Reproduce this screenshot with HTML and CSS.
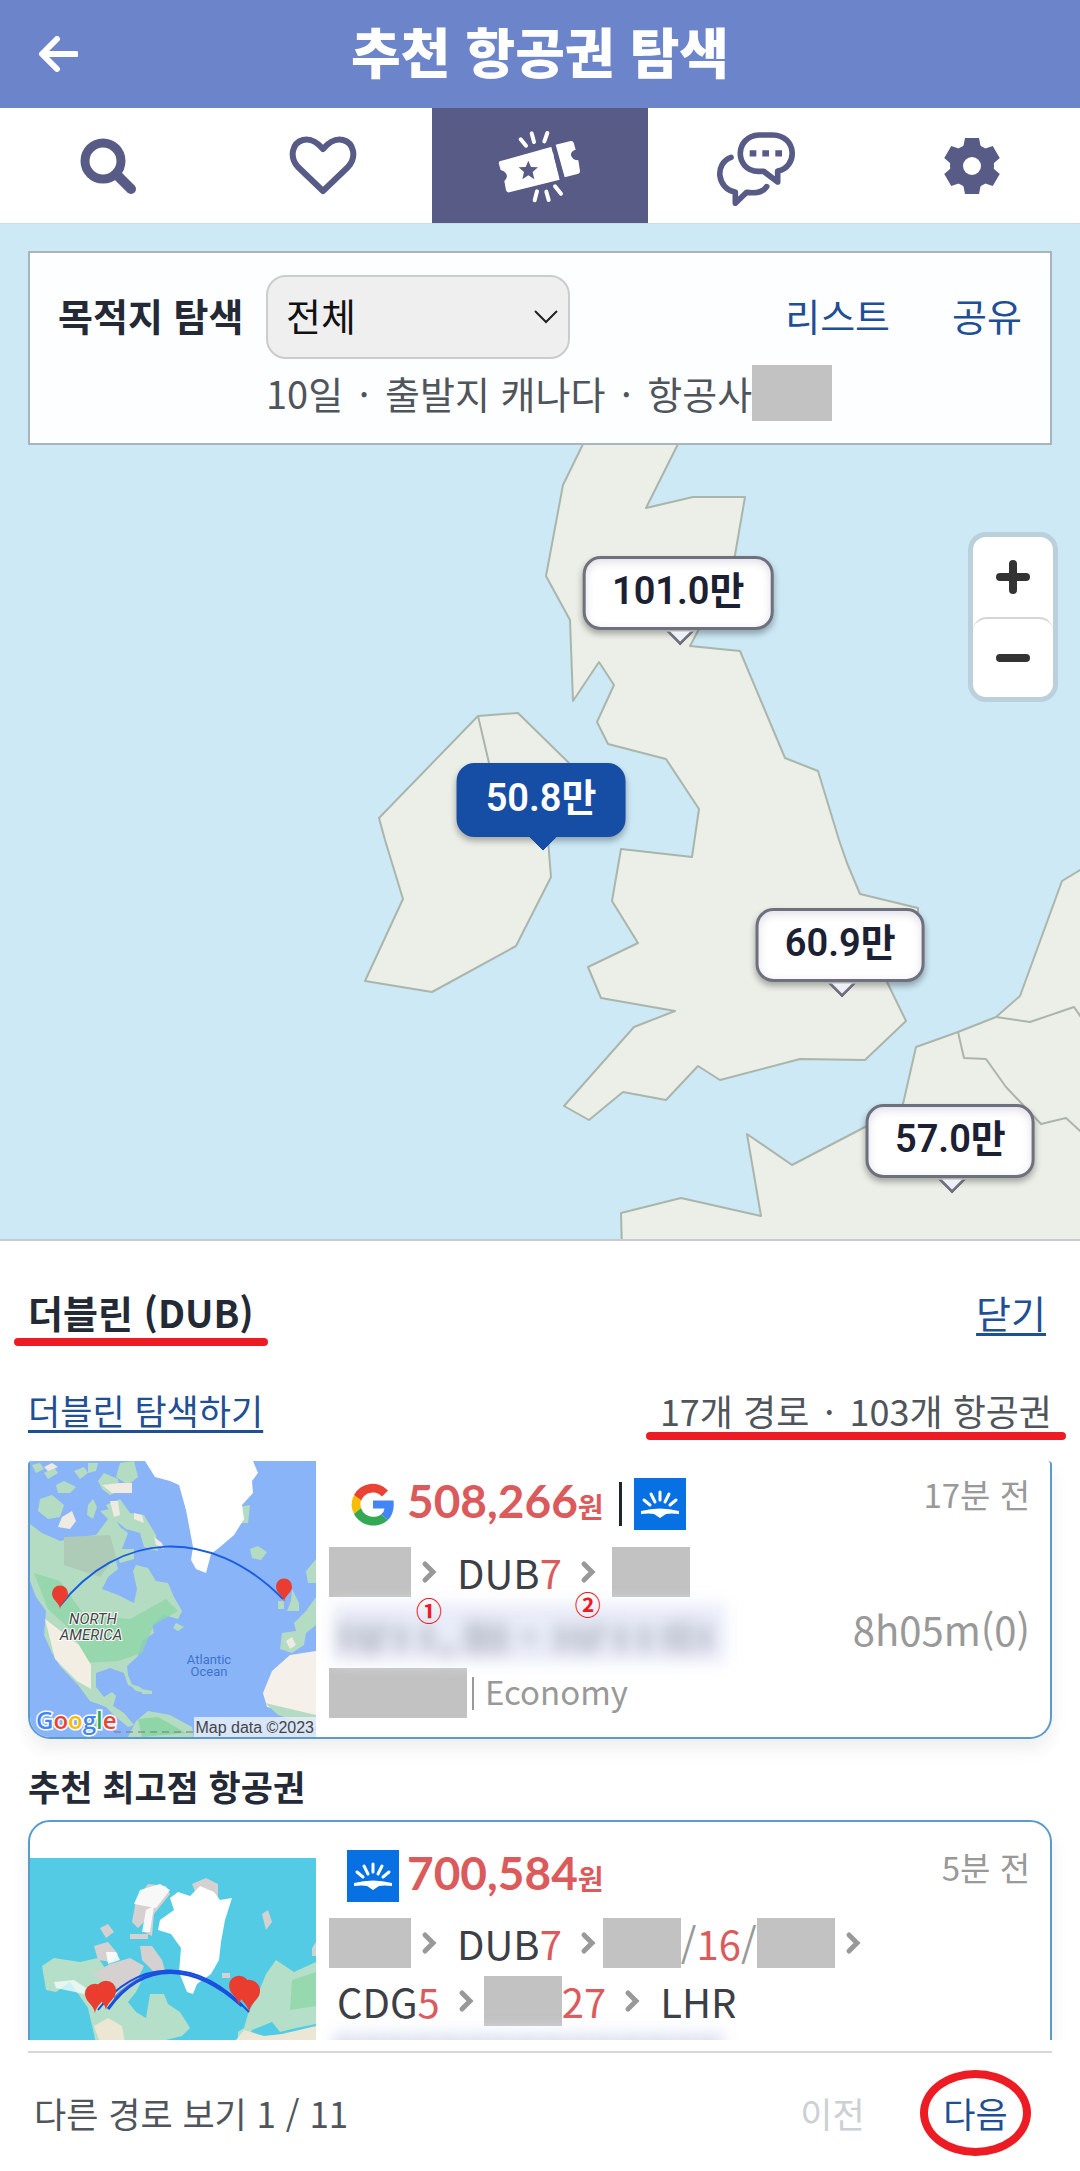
FILE: index.html
```html
<!DOCTYPE html>
<html lang="ko">
<head>
	<meta charset="utf-8">
	<meta name="viewport" content="width=device-width, initial-scale=1">
	<title>추천 항공권 탐색</title>
	<link rel="stylesheet" href="styles.css">
</head>
<body>

<!-- shared icons -->
<svg class="defs" aria-hidden="true">
	<symbol id="chev" viewBox="0 0 16 24">
		<path d="M4 4l8 8-8 8" fill="none" stroke="#999" stroke-width="5" stroke-linecap="round" stroke-linejoin="miter"/>
	</symbol>
	<symbol id="sky" viewBox="0 0 52 52">
		<rect width="52" height="52" fill="#0770e3"/>
		<g stroke="#fff" stroke-width="3" stroke-linecap="round">
			<path d="M26 14v8M17 16l4 8M35 16l-4 8M10 22l6 5M42 22l-6 5"/>
		</g>
		<path d="M7 33q19-5 38 0v3q-8-1-13 0l-6 4-6-4q-5-1-13 0z" fill="#fff"/>
	</symbol>
	<symbol id="mappin" viewBox="0 0 18 24">
		<path d="M9 24C8 17 1 15 1 8.500a8 8 0 0 1 16 0C17 15 10 17 9 24z" fill="#ea3c2f"/>
	</symbol>
</svg>

<header class="top">
	<button class="back" aria-label="뒤로">
		<svg width="40" height="36" viewBox="0 0 40 36"><path d="M19 3L4 18l15 15M5 18h33" fill="none" stroke="#fff" stroke-width="6" stroke-linecap="round" stroke-linejoin="round"/></svg>
	</button>
	<h1>추천 항공권 탐색</h1>
</header>

<nav class="tabs">
	<a href="#" aria-label="검색">
		<svg width="56" height="56" viewBox="0 0 56 56"><circle cx="23" cy="23" r="18" fill="none" stroke="#575b86" stroke-width="9"/><path d="M38 38l13 13" stroke="#575b86" stroke-width="10" stroke-linecap="round"/></svg>
	</a>
	<a href="#" aria-label="찜">
		<svg width="70" height="60" viewBox="0 0 70 60"><path d="M34 55L9 31C0 21 3 7 14 4c8-2 14 2 20 9 6-7 12-11 20-9 11 3 14 17 5 27z" fill="none" stroke="#575b86" stroke-width="6" stroke-linejoin="round"/></svg>
	</a>
	<a href="#" class="on" aria-label="추천 항공권">
		<svg width="90" height="80" viewBox="48 46 270 240">
			<path d="M62 152q-4 4-2 9l5 17q18 5 19 19-1 7-8 14l5 28q3 8 10 6l151-38-24-99zM230 102l45-11q7-1 9 5l6 21q-15 4-14 17 4 15 22 15l5 32q0 6-5 8l-41 11z" fill="#fff"/>
			<path d="M148 150l8 19 21 1-16 14 5 22-18-12-18 12 5-22-16-14 21-1z" fill="#575b86"/>
			<path d="M221 106l26 98" stroke="#575b86" stroke-width="9" stroke-dasharray="22 8"/>
			<path d="M125 86l16 19M158 68l7 26M205 67l-9 25M174 242l-7 27M202 243l7 25M228 227l18 22" stroke="#fff" stroke-width="12" stroke-linecap="round"/>
		</svg>
	</a>
	<a href="#" aria-label="채팅">
		<svg width="86" height="80" viewBox="700 48 258 240" fill="none" stroke="#575b86" stroke-width="17" stroke-linejoin="round" stroke-linecap="round">
			<path d="M838 75h42c72 2 76 96 14 108v33l-42-32h-16c-73-2-72-106 2-109z"/>
			<path d="M754 142c-50 18-43 94 13 104v34l34-33c28 4 50-2 60-17"/>
			<path d="M810 130h20M848 130h20M887 130h20" stroke-width="19" stroke-linecap="butt"/>
		</svg>
	</a>
	<a href="#" aria-label="설정">
		<svg width="58" height="58" viewBox="0 0 58 58">
			<g fill="#575b86"><circle cx="29" cy="29" r="22"/>
			<path id="tooth" d="M22 1h14l2 10H20z"/>
			<use href="#tooth" transform="rotate(60 29 29)"/><use href="#tooth" transform="rotate(120 29 29)"/><use href="#tooth" transform="rotate(180 29 29)"/><use href="#tooth" transform="rotate(240 29 29)"/><use href="#tooth" transform="rotate(300 29 29)"/></g>
			<circle cx="29" cy="29" r="9" fill="#fff"/>
		</svg>
	</a>
</nav>

<section class="map">
	<svg class="land" viewBox="0 224 1080 1015" aria-hidden="true">
		<g fill="#ecefe7" stroke="#aab5ab" stroke-width="2" stroke-linejoin="round">
			<path d="M585 440L563 485 546 576 570 620 573 701 599 662 614 685 597 722 608 744 666 759 699 809 692 857 621 849 612 901 638 943 588 967 601 998 675 1011 634 1027 564 1106 589 1120 623 1092 666 1100 698 1066 720 1080 800 1059 865 1060 906 1021 887 982 900 950 918 912 918 908 860 894 847 863 839 840 818 771 785 758 740 651 690 646 699 629 735 555 745 497 693 497 646 508 680 440z"/>
			<path d="M478 716L518 713 569 763 590 800 548 840 551 877 516 946 432 992 365 981 403 899 385 840 379 818z"/>
			<path d="M478 716L489 763 500 800 560 820" fill="none"/>
			<path d="M1090 864L1062 881 1020 996 996 1017 958 1032 916 1047 903 1104 865 1127 792 1165 747 1134 761 1216 681 1198 621 1213 622 1250 1090 1250z"/>
			<path d="M996 1017L1030 1022 1074 1007 1090 1030M958 1032L964 1058 986 1059 1006 1087 1041 1124 1066 1118 1090 1140" fill="none"/>
		</g>
	</svg>

	<form class="filter">
		<div class="filter-row">
			<label for="dest">목적지 탐색</label>
			<select id="dest"><option>전체</option></select>
			<a href="#" class="list-link">리스트</a>
			<a href="#">공유</a>
		</div>
		<p><span>10일 <b class="dot">·</b> 출발지 캐나다 <b class="dot">·</b> 항공사</span><span class="redact r-air"></span></p>
	</form>

	<button class="pin p-edi">101.0만</button>
	<button class="pin p-dub sel">50.8만</button>
	<button class="pin p-lon">60.9만</button>
	<button class="pin p-par">57.0만</button>

	<div class="zoom">
		<button aria-label="확대"><svg width="34" height="34" viewBox="0 0 34 34"><path d="M17 4v26M4 17h26" stroke="#333" stroke-width="8" stroke-linecap="round"/></svg></button>
		<button aria-label="축소"><svg width="34" height="34" viewBox="0 0 34 34"><path d="M4 17h26" stroke="#333" stroke-width="8" stroke-linecap="round"/></svg></button>
	</div>
</section>

<main class="sheet">
	<div class="row title-row">
		<h2 class="marked">더블린 (DUB)</h2>
		<a href="#" class="close">닫기</a>
	</div>
	<div class="row sub-row">
		<a href="#">더블린 탐색하기</a>
		<span class="count marked">17개 경로 <b class="dot">·</b> 103개 항공권</span>
	</div>

	<div class="results">
		<article class="card cut">
			<svg class="thumb" viewBox="0 0 286 276" preserveAspectRatio="xMidYMid slice">
				<rect width="286" height="276" fill="#8ab4f8"/>
				<g fill="#b4dcc2">
					<path d="M0 63L12 72 30 80 50 76 66 74 78 58 70 50 80 48 90 66 98 72 92 88 86 100 88 108 78 116 72 128 88 134 104 142 107 128 103 110 106 104 118 107 126 120 138 122 144 136 152 150 148 158 134 154 122 164 124 172 112 180 108 195 97 205 98 214 103 226 98 224 94 212 80 207 66 212 66 226 74 236 82 231 86 235 83 245 94 252 104 264 98 266 86 256 76 246 60 240 48 224 30 205 22 192 14 174 16 150 6 136 0 120z"/>
					<path d="M10 38l12-4 12 10-4 12-12 2-10-8zM26 24l8-4 12 6-6 6-12 0zM58 44l5-6 4 8-4 12-6-4zM68 20l6-8 14 6 2 12-10 4-8-6zM76 44l14-6 10 14 14 2 12 20 2 16-14-4-4-14-14-4-12-10zM14 12l10-6 4 6-10 6zM90 2l14-2 4 16-10 8-12-8zM84 88l20 0 0 10-14 4zM220 88l8-3 9 6-6 8-9-2zM106 260l12-10 22 4 22 12 2 10-66 0zM262 128l7 14 0 8-12 0 4-10zM248 140l6 0 0 8-6 0zM252 172l14-2-2-8 12-12 10-14 0 28-10 8-2 12-12 8-12-4zM276 110l10-12 0 24-8 0zM208 46l12-2-2 18-10 0zM146 162l8 4-6 4-5-3zM2 4l8-2 4 6-8 4zM44 10l10-4 4 6-8 6zM58 2l10 0-2 8-8 2z"/>
				</g>
				<g fill="#8ed6a7"><path d="M4 112l26 8 24 34 46 4 36-20 12 12-24 14-12 28-24 8-34 2-8-28-28-26z" opacity=".8"/><path d="M108 258l20-2 28 16-44 4z"/></g>
				<path d="M34 76l46-2 6 22-16 20-36-12z" fill="#aecbb8"/>
				<path d="M15 158l34 26 12 20 0 24-14-8-22-22z" fill="#f3eee3"/>
				<path d="M286 190l-26 4-18 16-9 22 4 14 49 10z" fill="#f5f1ea"/>
				<path d="M235 242l51 12 0 12-38-12z" fill="#b4dcc2"/>
				<path d="M72 24l18-2 12 0 0 10-20 0zM80 40l8 0 2 14-6 2zM32 56l10-6 4 10-6 8-12-2zM256 180l6-4 4 8-6 4zM124 76l8 6 2 6-8-4zM14 6l8-4 6 4-10 4zM104 52l8 2 2 8-10-4z" fill="#efebe3"/>
				<path d="M115 0L125 16 140 20 149 24 156 49 160 70 163 86 161 99 166 108 176 112 181 93 190 86 204 74 214 58 212 44 223 32 222 20 228 12 223 0z" fill="#fff"/>
				<path d="M98 222l12 4 6 6-10-2zM112 228l10 2 0 3-10 0z" fill="#b4dcc2"/>
				<path d="M30 145C88 70 180 64 253 138" fill="none" stroke="#1a5ee0" stroke-width="2"/>
				<use href="#mappin" x="21" y="124" width="18" height="24"/>
				<use href="#mappin" x="245" y="117" width="18" height="24"/>
				<g class="place"><text x="63" y="163">NORTH</text><text x="61" y="179">AMERICA</text></g>
				<g class="ocean"><text x="179" y="203">Atlantic</text><text x="179" y="215">Ocean</text></g>
				<path d="M84 271h80" stroke="#777" stroke-dasharray="7 5"/>
				<text class="google" x="6" y="268"><tspan fill="#4285f4">G</tspan><tspan fill="#ea4335">o</tspan><tspan fill="#fbbc05">o</tspan><tspan fill="#4285f4">g</tspan><tspan fill="#34a853">l</tspan><tspan fill="#ea4335">e</tspan></text>
				<rect x="164" y="256" width="122" height="20" fill="#e6edf8" opacity=".85"/>
				<text class="credit" x="284" y="272">Map data ©2023</text>
			</svg>
			<div class="info">
				<div class="price-row">
					<svg class="logo" viewBox="0 0 52 52">
						<path d="M26 14.500c4 0 7 2 9 4l6-6A21 21 0 0 0 7 17l7 6c2-5 6-8.500 12-8.500z" fill="#ea4335"/>
						<path d="M7 17a21 21 0 0 0 0 19l7-6q-1.500-4 0-8z" fill="#fbbc05"/>
						<path d="M7 36c7 13 24 15 34 6l-7-5.500c-6 4.500-17 2.500-20-6.500z" fill="#34a853"/>
						<path d="M26 22.500h20.500c1 8-1 15-5.500 19.500L34 36.500q3-2 3.500-6H26z" fill="#4285f4"/>
					</svg>
					<strong class="price">508,266<small>원</small></strong>
					<span class="bar"></span>
					<svg class="logo"><use href="#sky"/></svg>
				</div>
				<div class="route">
					<span class="redact r-from"></span>
					<span class="hop"><svg class="chev"><use href="#chev"/></svg><b class="step">①</b></span>
					<span class="code">DUB<i>7</i></span>
					<span class="hop"><svg class="chev"><use href="#chev"/></svg><b class="step step-up">②</b></span>
					<span class="redact r-to r-gap"></span>
				</div>
				<div class="dates">
					<svg class="smudge" viewBox="0 0 400 70" preserveAspectRatio="none" aria-hidden="true">
						<path d="M4 36h392" stroke="#e9ecf9" stroke-width="58"/>
						<path d="M16 26v28M34 26v28M54 26l-10 30M72 28v26M98 28v26M112 54h12M142 24v32M156 26v30M172 26v30M194 40h12M232 28v26M250 28v26M272 26l-10 28M292 28v26M316 28v26M340 26v28M356 24v32M376 28v26" stroke="#a9adb9" stroke-width="8"/>
					</svg>
				</div>
				<div class="cabin"><span class="redact r-cabin"></span><span class="pipe"></span><span class="class-name">Economy</span></div>
			</div>
			<div class="side"><span>17분 전</span><span class="dur">8h05m(0)</span></div>
		</article>

		<h3>추천 최고점 항공권</h3>

		<article class="card">
			<svg class="thumb low" viewBox="0 0 286 240" preserveAspectRatio="xMidYMin slice">
				<rect width="286" height="240" fill="#53cbe4"/>
				<path d="M12 108l12-8 26 4 18-4 10 14 22-2 12 10-6 12-8 10 8 10 10 6 4-24 14 0 4 10 12 8 10 16-8 8-16 4-6 14-8 12-2 12H72L64 176 58 150 40 124 26 134 16 132z" fill="#b5dfc8"/>
				<path d="M80 106l20-6 14 8-6 12-12 12-14-6-20-10zM64 88l14-4 10 12-6 8-14-2zM70 70l8-4 6 8-8 6zM110 88l12 0 10 14 4 14-12-2-12-12zM106 42l-4 22 6 6 8-8-2 12 8 4 2-22 16-20-4-8-18-2zM162 26l14-6 12 6 0 14-22-4zM232 56l6-4 4 12-6 8zM192 115l8 0 0 5-8 0zM100 76l18 0 0 5-18 0zM282 90l4-6 0 14-4 0z" fill="#d5d1d0"/>
				<path d="M110 32l20-6 10 6-14 18-22-4zM116 52l8-4-4 26-8 0zM76 94l10 0 4 8-12 4z" fill="#fff" opacity=".85"/>
				<path d="M130 62l14-10-4-12 8-6 12 4 10-10 14 6 6 8 12-2-7 22-4 22-2 18-8 14-14 10-4 10-6-2-8-20 2-24-10-14-13-4z" fill="#fff"/>
				<path d="M286 104l-22 10-18-12-10 14-8 20-10 20-4 14-6 4 0 8 10 0 4-10 20-8 8 10 16-4 20-4z" fill="#b5dfc8"/>
				<path d="M64 168l14-8 14 8 4 22H72zM206 182l8-10 20 6 18-2 34-8v72h-70z" fill="#ece6d5"/>
				<path d="M262 122l24-8v34l-26 4z" fill="#96d9af"/>
				<path d="M24 124l20-2 12 8-2 6-28-6z" fill="#fff" opacity=".7"/>
				<g fill="none" stroke="#1a4fe0"><path d="M68 152C105 103 165 95 219 154" stroke-width="2"/><path d="M78 151C115 100 165 106 212 148" stroke-width="3"/><path d="M84 140C120 104 165 102 209 145" stroke-width="2" opacity=".6"/></g>
				<use href="#mappin" x="52" y="125" width="26" height="30"/><use href="#mappin" x="63" y="122" width="26" height="30"/>
				<use href="#mappin" x="196" y="117" width="26" height="30"/><use href="#mappin" x="206" y="121" width="26" height="33"/>
			</svg>
			<div class="info">
				<div class="price-row tall">
					<svg class="logo"><use href="#sky"/></svg>
					<strong class="price">700,584<small>원</small></strong>
				</div>
				<div class="route">
					<span class="redact r-from"></span>
					<span class="hop"><svg class="chev"><use href="#chev"/></svg></span>
					<span class="code">DUB<i>7</i></span>
					<span class="hop"><svg class="chev"><use href="#chev"/></svg></span>
					<span class="redact r-via"></span>
					<span class="gate"><s>/</s><i>16</i><s>/</s></span>
					<span class="redact r-to"></span>
					<span class="hop"><svg class="chev"><use href="#chev"/></svg></span>
				</div>
				<div class="route second">
					<span class="code">CDG<i>5</i></span>
					<span class="hop"><svg class="chev"><use href="#chev"/></svg></span>
					<span class="redact r-to"></span>
					<span class="code gate"><i>27</i></span>
					<span class="hop"><svg class="chev"><use href="#chev"/></svg></span>
					<span class="code">LHR</span>
				</div>
				<div class="dates">
					<svg class="smudge" viewBox="0 0 400 70" preserveAspectRatio="none" aria-hidden="true">
						<path d="M4 36h392" stroke="#e9ecf9" stroke-width="60"/>
						<path d="M8 26h384" stroke="#c6cce0" stroke-width="22" stroke-dasharray="16 10"/>
					</svg>
				</div>
			</div>
			<div class="side late"><span>5분 전</span></div>
		</article>
	</div>

	<footer class="pager">
		<span>다른 경로 보기 1 / 11</span>
		<button disabled>이전</button>
		<button class="next">다음</button>
	</footer>
</main>

</body>
</html>
```

FILE: styles.css
```css
* {
	box-sizing: border-box;
}
body {
	margin: 0;
	background: #fff;
	font-family: "Noto Sans CJK KR", sans-serif;
	font-size: 35px;
	line-height: 50px;
	color: #50555c;
}
h1, h2, h3, p {
	margin: 0;
}
a {
	color: #1f4f94;
}
button {
	font: inherit;
	padding: 0;
	border: 0;
	background: none;
}
svg {
	display: block;
	flex: none;
}
.defs {
	position: absolute;
	width: 0;
	height: 0;
}
.redact {
	flex: none;
	height: 50px;
	background: #c2c2c2;
}
.dot {
	margin: 0 5px;
	font-weight: 400;
}

/* header */
.top {
	display: grid;
	grid-template-columns: 116px 1fr 116px;
	align-items: center;
	height: 108px;
	background: #6b84ca;
}
.back {
	display: flex;
	justify-content: center;
}
h1 {
	padding-bottom: 6px;
	text-align: center;
	font-size: 54px;
	line-height: 76px;
	font-weight: 900;
	color: #fff;
}
.tabs {
	display: grid;
	grid-template-columns: repeat(5, 1fr);
	height: 116px;
	border-bottom: 1px solid #cfdbe2;
}
.tabs a {
	display: flex;
	align-items: center;
	justify-content: center;
}
.tabs .on {
	background: #575b86;
}

/* map */
.map {
	position: relative;
	overflow: hidden;
	background: #cce9f5;
}
.land {
	width: 100%;
	height: auto;
}
.filter {
	position: absolute;
	top: 27px;
	left: 28px;
	right: 28px;
	padding: 22px 28px;
	border: 2px solid #a9b4bd;
	background: #fdfeff;
}
.filter-row {
	display: flex;
	align-items: center;
	font-size: 38px;
}
.filter-row label {
	width: 208px;
	padding-bottom: 4px;
	font-weight: 700;
	color: #232a36;
}
.filter-row select {
	width: 304px;
	height: 84px;
	padding: 0 16px 4px 18px;
	border: 2px solid #ccc;
	border-radius: 20px;
	background: #efefef url("data:image/svg+xml,%3Csvg xmlns='http://www.w3.org/2000/svg' width='26' height='16'%3E%3Cpath d='M2 2l11 11L24 2' fill='none' stroke='%23222' stroke-width='2'/%3E%3C/svg%3E") no-repeat right 9px center;
	appearance: none;
	font: inherit;
	color: #111;
}
.filter-row a {
	padding-bottom: 4px;
	text-decoration: none;
}
.list-link {
	margin: 0 62px 0 auto;
}
.filter p {
	display: flex;
	align-items: center;
	padding-left: 208px;
	margin-top: 6px;
	height: 56px;
	font-size: 38px;
}
.r-air {
	width: 80px;
	height: 56px;
}
.pin {
	position: absolute;
	transform: translateX(-50%);
	height: 74px;
	padding: 0 26px 4px;
	border: 3px solid #6f707d;
	border-radius: 18px;
	background: #fff;
	box-shadow: 0 4px 6px rgba(0,0,0,.3), inset 0 3px 8px rgba(90,90,140,.2);
	font: 600 38px/64px Roboto, "Noto Sans CJK KR", sans-serif;
	color: #1c2033;
	white-space: nowrap;
}
.pin::after {
	content: "";
	position: absolute;
	left: 50%;
	top: 100%;
	width: 20px;
	height: 20px;
	margin: -9px 0 0 -10px;
	background: #eef0f8;
	border: solid #6f707d;
	border-width: 0 3px 3px 0;
	transform: rotate(45deg);
	clip-path: polygon(100% 12%, 100% 100%, 12% 100%);
}
.pin.sel {
	background: #164da5;
	border-color: #164da5;
	color: #fff;
	box-shadow: 0 4px 6px rgba(0,0,0,.3);
}
.pin.sel::after {
	background: #164da5;
	border-color: #164da5;
	margin-top: -11px;
}
.p-edi {
	left: 62.8%;
	top: 32.7%;
}
.p-dub {
	left: 50.1%;
	top: 53.1%;
}
.p-lon {
	left: 77.8%;
	top: 67.4%;
}
.p-par {
	left: 88%;
	top: 86.7%;
}
.zoom {
	position: absolute;
	right: 22px;
	top: 308px;
	border: 5px solid #bbd0db;
	border-radius: 18px;
	background: #fff;
}
.zoom button {
	display: flex;
	align-items: center;
	justify-content: center;
	width: 80px;
	height: 80px;
	border-radius: 14px;
}
.zoom button + button {
	border-top: 2px solid #d5d5d5;
}

/* city sheet */
.sheet {
	padding: 0 28px;
	border-top: 2px solid #c8ccd0;
}
.row {
	display: flex;
	align-items: center;
	justify-content: space-between;
}
.title-row {
	height: 142px;
	font-size: 38px;
	padding-right: 6px;
}
h2 {
	font-size: 38px;
	color: #232a36;
}
.sub-row {
	height: 54px;
	margin-bottom: 24px;
}
.row a {
	text-decoration-thickness: 3px;
	text-underline-offset: 5px;
}
.marked {
	position: relative;
}
.marked::after {
	content: "";
	position: absolute;
	left: -14px;
	right: -14px;
	bottom: -9px;
	height: 8px;
	border-radius: 4px;
	background: #ed1c24;
}
.count {
	font-size: 36px;
}
.count::after {
	bottom: -5px;
}
.results {
	height: 579px;
	margin: 0 -28px;
	padding: 0 28px;
	overflow: hidden;
}
.card {
	display: flex;
	min-height: 278px;
	overflow: hidden;
	border: 2px solid #5b9bcb;
	border-radius: 22px;
	box-shadow: 0 10px 18px rgba(0,0,0,.07);
}
.cut {
	border-top: 0;
	border-radius: 4px 4px 22px 22px;
}
.thumb {
	width: 286px;
	height: 276px;
}
.low {
	height: 240px;
	margin-top: 36px;
}
.thumb text {
	font-family: Roboto, sans-serif;
}
.place {
	font-size: 15px;
	font-style: italic;
	text-anchor: middle;
	fill: #444;
	stroke: #fff;
	stroke-width: 2px;
	paint-order: stroke;
}
.ocean {
	font-size: 13px;
	text-anchor: middle;
	fill: #3f73c8;
}
.thumb .google {
	font-family: "Open Sans", sans-serif;
	font-size: 24px;
	font-weight: 600;
	stroke: #fff;
	stroke-width: 3px;
	paint-order: stroke;
}
.thumb .credit {
	font-family: "Liberation Sans", sans-serif;
	font-size: 16px;
	text-anchor: end;
	fill: #444;
}
.info {
	flex: 1;
	padding-left: 13px;
}
.price-row {
	display: flex;
	align-items: center;
	height: 86px;
	padding-left: 18px;
}
.tall {
	height: 96px;
	padding-top: 12px;
}
.logo {
	width: 52px;
	height: 52px;
}
.price {
	margin-left: 8px;
	font-family: Lato, "Noto Sans CJK KR", sans-serif;
	font-size: 46px;
	color: #db5b5d;
}
.price small {
	font-size: 28px;
}
.bar {
	width: 3px;
	height: 44px;
	margin: 0 12px 0 15px;
	background: #20242e;
}
.route {
	display: flex;
	align-items: center;
	height: 50px;
	font-size: 40px;
	line-height: 48px;
	color: #3c4046;
	white-space: nowrap;
}
.second {
	margin: 8px 0 0 -2px;
}
.route i {
	font-style: normal;
	color: #db5b5d;
}
.route s {
	color: #999;
	text-decoration: none;
}
.hop {
	position: relative;
	margin: 0 10px;
}
.chev {
	width: 16px;
	height: 24px;
}
.step {
	position: absolute;
	left: -5px;
	top: 32px;
	font-size: 26px;
	line-height: 36px;
	color: #ed1c24;
	z-index: 1;
}
.step-up {
	top: 26px;
}
.code {
	padding: 0 8px 0 10px;
}
.code.gate {
	padding-left: 0;
}
.r-from {
	width: 82px;
}
.r-to {
	width: 78px;
}
.r-via {
	width: 78px;
	margin-left: -3px;
}
.r-gap {
	margin-left: 6px;
}
.dates {
	height: 70px;
}
.smudge {
	width: 400px;
	height: 70px;
	filter: blur(8px);
}
.cabin {
	display: flex;
	align-items: center;
	height: 52px;
	font-size: 33px;
	color: #999;
}
.class-name {
	padding-bottom: 4px;
}
.r-cabin {
	width: 138px;
}
.pipe {
	width: 2px;
	height: 33px;
	margin: 0 11px 0 5px;
	background: #999;
}
.side {
	display: flex;
	flex-direction: column;
	align-items: flex-end;
	padding: 8px 20px 0 0;
	font-size: 33px;
	color: #999;
}
.late {
	padding-top: 20px;
}
.dur {
	margin-top: 85px;
	font-size: 40px;
}
h3 {
	margin: 22px 0 9px;
	font-size: 35px;
	color: #232a36;
}
.pager {
	display: flex;
	align-items: center;
	height: 120px;
	margin-top: 11px;
	padding: 2px 6px 0;
	border-top: 2px solid #d5d7d9;
}
.pager span {
	margin-right: auto;
}
.pager button {
	width: 111px;
	height: 86px;
	color: #ccd0d4;
}
.pager .next {
	margin: 0 15px 0 32px;
	border: 8px solid #ed1c24;
	border-radius: 50%;
	color: #1f4f94;
}
```
